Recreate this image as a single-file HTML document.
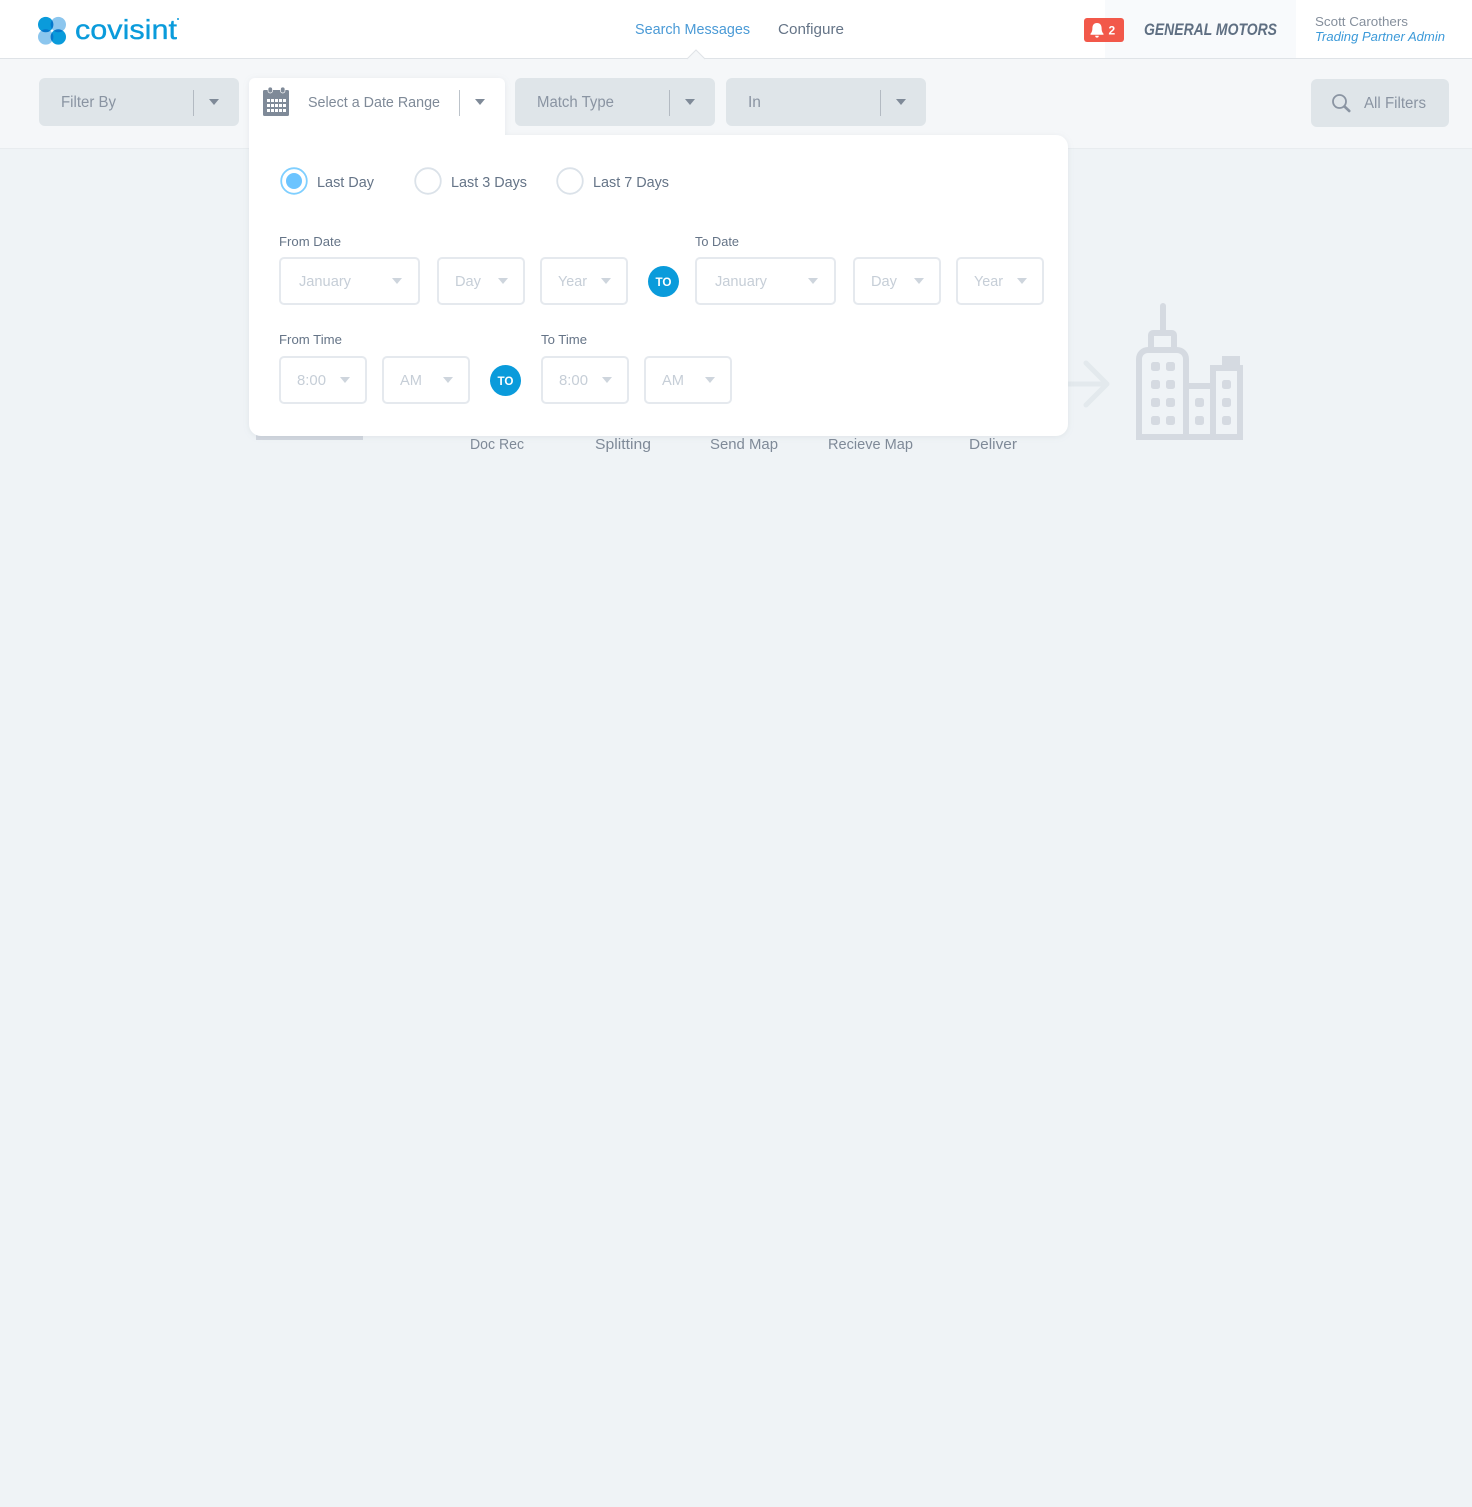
<!DOCTYPE html>
<html lang="en"><head><meta charset="utf-8"><title>Covisint</title>
<style>
html,body{margin:0;padding:0;background:#eff3f6}
svg{display:block}
text{font-family:"Liberation Sans",Arial,sans-serif;}
</style></head><body>
<svg width="1472" height="1507" viewBox="0 0 1472 1507" xmlns="http://www.w3.org/2000/svg">
<defs>
<filter id="sh" x="-5%" y="-10%" width="110%" height="120%"><feDropShadow dx="0" dy="1" stdDeviation="3" flood-color="#8a97a5" flood-opacity=".16"/></filter>
</defs>
<rect width="1472" height="1507" fill="#eff3f6"/>
<!-- header -->
<rect width="1472" height="58" fill="#fff"/>
<rect x="1105" width="191" height="58" fill="#f8fafc"/>
<rect y="59" width="1472" height="89" fill="#f5f7f9"/>
<rect y="58" width="1472" height="1" fill="#dfe3e7"/>
<rect y="148" width="1472" height="1" fill="#e8ecef"/>
<path d="M687 59L696 50L705 59" fill="#f5f7f9" stroke="#dfe3e7"/>
<!-- logo -->
<g style="isolation:isolate">
<circle cx="58.300" cy="24.600" r="7.700" fill="#8cc6ee" style="mix-blend-mode:multiply"/>
<circle cx="45.700" cy="36.900" r="7.700" fill="#8cc6ee" style="mix-blend-mode:multiply"/>
<circle cx="45.700" cy="24.600" r="7.700" fill="#0a9bdb" style="mix-blend-mode:multiply"/>
<circle cx="58.300" cy="36.900" r="7.700" fill="#0a9bdb" style="mix-blend-mode:multiply"/>
</g>
<text x="75" y="39" font-size="28" fill="#0a9bdb" stroke="#0a9bdb" stroke-width=".35" textLength="102" lengthAdjust="spacingAndGlyphs">covisint</text>
<circle cx="178" cy="19" r="1" fill="#0a9bdb"/>
<!-- nav -->
<text x="635" y="34" font-size="15" fill="#4a9ad6" textLength="115" lengthAdjust="spacingAndGlyphs">Search Messages</text>
<text x="778" y="34" font-size="15" fill="#657487" textLength="66" lengthAdjust="spacingAndGlyphs">Configure</text>
<rect x="1084" y="18" width="40" height="24" rx="3" fill="#f2584a"/>
<path d="M1097 23c-3.200 0-4.600 2.300-4.600 5 0 3-.7 4.500-1.900 5.800v1h13v-1c-1.200-1.300-1.900-2.800-1.900-5.800 0-2.700-1.400-5-4.600-5zM1095.200 35.800h3.600a1.800 1.800 0 0 1-3.600 0z" fill="#fff"/>
<text x="1108.500" y="34.500" font-size="12" font-weight="700" fill="#fff">2</text>
<text x="1144" y="35" font-size="16.500" font-weight="700" font-style="italic" fill="#5f6f82" textLength="133" lengthAdjust="spacingAndGlyphs">GENERAL MOTORS</text>
<text x="1315" y="26" font-size="13" fill="#858f9c" textLength="93" lengthAdjust="spacingAndGlyphs">Scott Carothers</text>
<text x="1315" y="41" font-size="13" font-style="italic" fill="#3c9ad9" textLength="130" lengthAdjust="spacingAndGlyphs">Trading Partner Admin</text>
<!-- filter bar -->
<rect x="39" y="78" width="200" height="48" rx="6" fill="#dfe5e9"/>
<rect x="193" y="90" width="1" height="26" fill="#b3bac2"/>
<path d="M209 99h10l-5 6z" fill="#7f8a98"/>
<text x="61" y="107" font-size="15.500" fill="#8a94a2" textLength="55" lengthAdjust="spacingAndGlyphs">Filter By</text>
<rect x="515" y="78" width="200" height="48" rx="6" fill="#dfe5e9"/>
<rect x="669" y="90" width="1" height="26" fill="#b3bac2"/>
<path d="M685 99h10l-5 6z" fill="#7f8a98"/>
<text x="537" y="107" font-size="15.500" fill="#8a94a2" textLength="77" lengthAdjust="spacingAndGlyphs">Match Type</text>
<rect x="726" y="78" width="200" height="48" rx="6" fill="#dfe5e9"/>
<rect x="880" y="90" width="1" height="26" fill="#b3bac2"/>
<path d="M896 99h10l-5 6z" fill="#7f8a98"/>
<text x="748" y="107" font-size="15.500" fill="#8a94a2">In</text>
<rect x="1311" y="79" width="138" height="48" rx="6" fill="#dfe5e9"/>
<circle cx="1339.500" cy="101.500" r="6.500" fill="none" stroke="#8a94a2" stroke-width="1.800"/>
<path d="M1344.500 106.500l4.800 4.500" stroke="#8a94a2" stroke-width="2.600" stroke-linecap="round"/>
<text x="1364" y="108" font-size="15.500" fill="#8a94a2" textLength="62" lengthAdjust="spacingAndGlyphs">All Filters</text>
<!-- behind panel -->
<rect x="256" y="430" width="107" height="10" fill="#d1d6de"/>
<g font-size="15" fill="#7f8a98">
<text x="470" y="449" textLength="54" lengthAdjust="spacingAndGlyphs">Doc Rec</text>
<text x="595" y="449" textLength="56" lengthAdjust="spacingAndGlyphs">Splitting</text>
<text x="710" y="449" textLength="68" lengthAdjust="spacingAndGlyphs">Send Map</text>
<text x="828" y="449" textLength="85" lengthAdjust="spacingAndGlyphs">Recieve Map</text>
<text x="969" y="449" textLength="48" lengthAdjust="spacingAndGlyphs">Deliver</text>
</g>
<!-- arrow -->
<path d="M1060 384H1107M1086 363L1107 384L1086 405" fill="none" stroke="#e3e9ed" stroke-width="5" stroke-linecap="round" stroke-linejoin="round"/>
<!-- building -->
<g fill="#d5dae1">
<rect x="1160" y="303" width="6" height="30" rx="3"/>
<path fill-rule="evenodd" d="M1153 330h19a5 5 0 0 1 5 5v13h-29v-13a5 5 0 0 1 5-5zM1154 336v11h17v-11z"/>
<path fill-rule="evenodd" d="M1148 347h29a12 12 0 0 1 12 12v24h21v-18h12v-9h18v9h3v75h-107v-81a12 12 0 0 1 12-12zM1148 353a6 6 0 0 0-6 6v75h41v-75a6 6 0 0 0-6-6zM1189 389v45h21v-45zM1216 371v63h21v-63z"/>
<rect x="1151" y="362" width="9" height="9" rx="2.500"/><rect x="1166" y="362" width="9" height="9" rx="2.500"/>
<rect x="1151" y="380" width="9" height="9" rx="2.500"/><rect x="1166" y="380" width="9" height="9" rx="2.500"/>
<rect x="1151" y="398" width="9" height="9" rx="2.500"/><rect x="1166" y="398" width="9" height="9" rx="2.500"/>
<rect x="1151" y="416" width="9" height="9" rx="2.500"/><rect x="1166" y="416" width="9" height="9" rx="2.500"/>
<rect x="1195" y="398" width="9" height="9" rx="2.500"/><rect x="1195" y="416" width="9" height="9" rx="2.500"/>
<rect x="1222" y="380" width="9" height="9" rx="2.500"/><rect x="1222" y="398" width="9" height="9" rx="2.500"/><rect x="1222" y="416" width="9" height="9" rx="2.500"/>
</g>
<!-- panel -->
<g filter="url(#sh)">
<path d="M255 78H499a6 6 0 0 1 6 6V135H1056a12 12 0 0 1 12 12V424a12 12 0 0 1-12 12H261a12 12 0 0 1-12-12V84a6 6 0 0 1 6-6z" fill="#fff"/>
</g>
<!-- calendar -->
<rect x="263" y="90" width="26" height="26" rx="1.500" fill="#7f8a98"/>
<rect x="268" y="87" width="4.500" height="6" rx="2.200" fill="#7f8a98" stroke="#fff" stroke-width=".7"/>
<rect x="280.500" y="87" width="4.500" height="6" rx="2.200" fill="#7f8a98" stroke="#fff" stroke-width=".7"/>
<g fill="#fff">
<rect x="267" y="99" width="3" height="3"/><rect x="271" y="99" width="3" height="3"/><rect x="275" y="99" width="3" height="3"/><rect x="279" y="99" width="3" height="3"/><rect x="283" y="99" width="3" height="3"/>
<rect x="267" y="104" width="3" height="3"/><rect x="271" y="104" width="3" height="3"/><rect x="275" y="104" width="3" height="3"/><rect x="279" y="104" width="3" height="3"/><rect x="283" y="104" width="3" height="3"/>
<rect x="267" y="109" width="3" height="3"/><rect x="271" y="109" width="3" height="3"/><rect x="275" y="109" width="3" height="3"/><rect x="279" y="109" width="3" height="3"/><rect x="283" y="109" width="3" height="3"/>
</g>
<text x="308" y="107" font-size="15" fill="#7f8a98" textLength="132" lengthAdjust="spacingAndGlyphs">Select a Date Range</text>
<rect x="459" y="90" width="1" height="26" fill="#bcc3ca"/>
<path d="M475 99h10l-5 6z" fill="#7f8a98"/>
<!-- radios -->
<circle cx="294" cy="181" r="12.800" fill="#fff" stroke="#7fcfff" stroke-width="1.800"/>
<circle cx="294" cy="181" r="8" fill="#6cc4ff"/>
<circle cx="428" cy="181" r="12.800" fill="#fff" stroke="#dbe2e9" stroke-width="1.800"/>
<circle cx="570" cy="181" r="12.800" fill="#fff" stroke="#dbe2e9" stroke-width="1.800"/>
<g font-size="15" fill="#657487">
<text x="317" y="187" textLength="57" lengthAdjust="spacingAndGlyphs">Last Day</text>
<text x="451" y="187" textLength="76" lengthAdjust="spacingAndGlyphs">Last 3 Days</text>
<text x="593" y="187" textLength="76" lengthAdjust="spacingAndGlyphs">Last 7 Days</text>
</g>
<g font-size="12.500" fill="#657487">
<text x="279" y="246" textLength="62" lengthAdjust="spacingAndGlyphs">From Date</text>
<text x="695" y="246" textLength="44" lengthAdjust="spacingAndGlyphs">To Date</text>
<text x="279" y="344" textLength="63" lengthAdjust="spacingAndGlyphs">From Time</text>
<text x="541" y="344" textLength="46" lengthAdjust="spacingAndGlyphs">To Time</text>
</g>
<!-- selects -->
<g fill="#fff" stroke="#e5e9ee" stroke-width="2">
<rect x="280" y="258" width="139" height="46" rx="4"/>
<rect x="438" y="258" width="86" height="46" rx="4"/>
<rect x="541" y="258" width="86" height="46" rx="4"/>
<rect x="696" y="258" width="139" height="46" rx="4"/>
<rect x="854" y="258" width="86" height="46" rx="4"/>
<rect x="957" y="258" width="86" height="46" rx="4"/>
<rect x="280" y="357" width="86" height="46" rx="4"/>
<rect x="383" y="357" width="86" height="46" rx="4"/>
<rect x="542" y="357" width="86" height="46" rx="4"/>
<rect x="645" y="357" width="86" height="46" rx="4"/>
</g>
<g fill="#ced5dd">
<path d="M392 278h10l-5 6zM498 278h10l-5 6zM601 278h10l-5 6zM808 278h10l-5 6zM914 278h10l-5 6zM1017 278h10l-5 6zM340 377h10l-5 6zM443 377h10l-5 6zM602 377h10l-5 6zM705 377h10l-5 6z"/>
</g>
<g font-size="15" fill="#c6ced7">
<text x="299" y="286" textLength="52" lengthAdjust="spacingAndGlyphs">January</text>
<text x="455" y="286" textLength="26" lengthAdjust="spacingAndGlyphs">Day</text>
<text x="558" y="286" textLength="29" lengthAdjust="spacingAndGlyphs">Year</text>
<text x="715" y="286" textLength="52" lengthAdjust="spacingAndGlyphs">January</text>
<text x="871" y="286" textLength="26" lengthAdjust="spacingAndGlyphs">Day</text>
<text x="974" y="286" textLength="29" lengthAdjust="spacingAndGlyphs">Year</text>
<text x="297" y="385" textLength="29" lengthAdjust="spacingAndGlyphs">8:00</text>
<text x="400" y="385" textLength="22" lengthAdjust="spacingAndGlyphs">AM</text>
<text x="559" y="385" textLength="29" lengthAdjust="spacingAndGlyphs">8:00</text>
<text x="662" y="385" textLength="22" lengthAdjust="spacingAndGlyphs">AM</text>
</g>
<circle cx="663.500" cy="281.500" r="15.500" fill="#0a9bdb"/>
<circle cx="505.500" cy="380.500" r="15.500" fill="#0a9bdb"/>
<text x="655.500" y="286" font-size="12" font-weight="700" fill="#fff" textLength="16" lengthAdjust="spacingAndGlyphs">TO</text>
<text x="497.500" y="385" font-size="12" font-weight="700" fill="#fff" textLength="16" lengthAdjust="spacingAndGlyphs">TO</text>
</svg>
</body></html>
